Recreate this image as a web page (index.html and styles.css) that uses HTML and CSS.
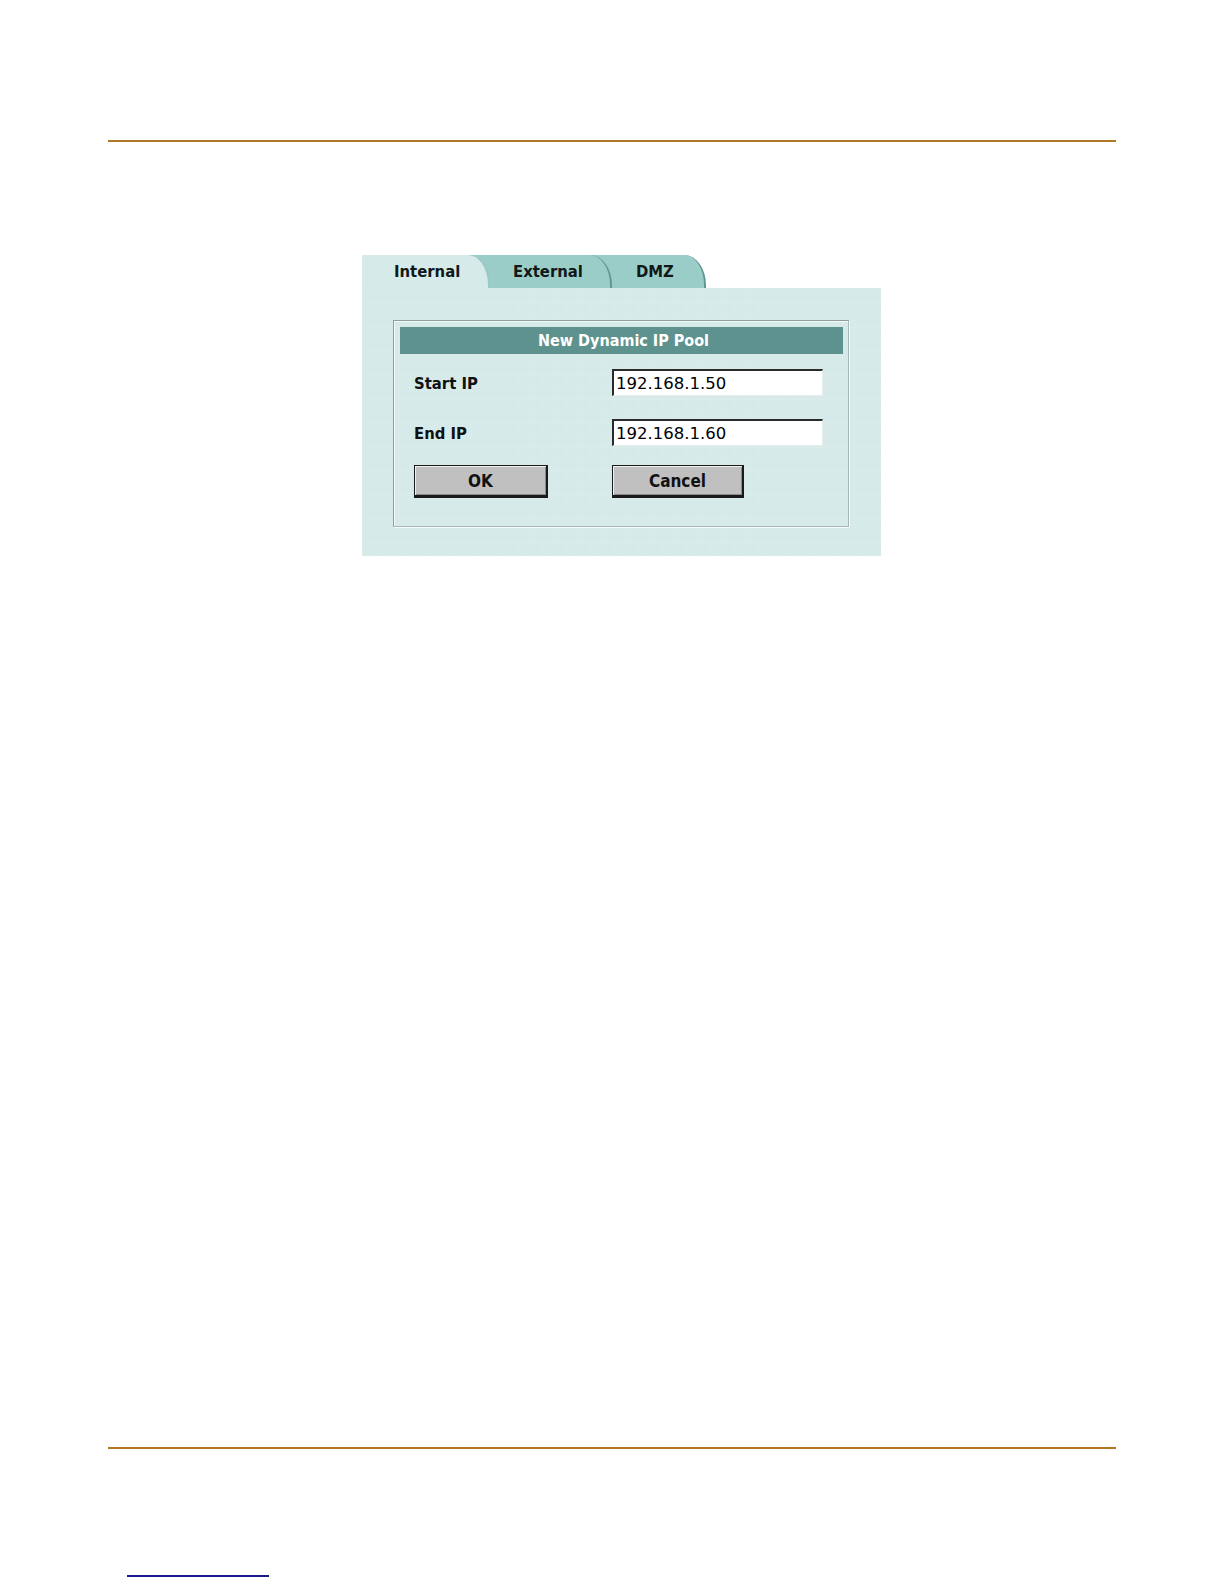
FILE: index.html
```html
<!DOCTYPE html>
<html lang="en">
<head>
<meta charset="utf-8">
<title>New Dynamic IP Pool</title>
<link rel="stylesheet" href="styles.css">
</head>
<body>
<div class="page">
  <div class="rule rule-top"></div>

  <div class="dialog">
    <div class="tabs">
      <div class="tab tab-internal">Internal</div>
      <div class="tab tab-external">External</div>
      <div class="tab tab-dmz">DMZ</div>
    </div>
    <div class="panel">
      <div class="box">
        <div class="box-title">New Dynamic IP Pool</div>
        <div class="form-row">
          <span class="label">Start IP</span>
          <span class="field">192.168.1.50</span>
        </div>
        <div class="form-row">
          <span class="label">End IP</span>
          <span class="field">192.168.1.60</span>
        </div>
        <div class="button-row">
          <span class="btn btn-ok">OK</span>
          <span class="btn btn-cancel">Cancel</span>
        </div>
      </div>
    </div>
  </div>

  <div class="spacer"></div>
  <div class="rule rule-bottom"></div>
  <div class="footer-link"></div>
</div>
</body>
</html>
```

FILE: styles.css
```css
html, body {
  margin: 0;
  padding: 0;
  background: #ffffff;
}

.page {
  width: 1224px;
  height: 1584px;
  display: flex;
  flex-direction: column;
  font-family: "DejaVu Sans Condensed", "DejaVu Sans", sans-serif;
  font-stretch: condensed;
}

.rule {
  height: 2px;
  width: 1008px;
  margin-left: 108px;
  background: #b27722;
}

.rule-top {
  margin-top: 140px;
}

.dialog {
  margin-top: 113px;
  margin-left: 362px;
  width: 519px;
  display: flex;
  flex-direction: column;
}

/* ---------- tabs ---------- */
.tabs {
  display: flex;
  height: 33px;
}

.tab {
  position: relative;
  height: 33px;
  box-sizing: border-box;
  line-height: 34px;
  font-weight: bold;
  font-size: 16.5px;
  color: #101818;
  background: #9bcdc8;
}

.tab::after {
  content: "";
  position: absolute;
  top: 0;
  left: 100%;
  width: 22px;
  height: 33px;
  box-sizing: border-box;
  background: inherit;
  border-right: 2px solid #5f9893;
  border-top-right-radius: 22px 30px;
}

.tab-internal {
  width: 106px;
  padding-left: 32px;
  background: #d6ebe9;
  z-index: 3;
}

.tab-internal::after {
  border-right-color: #9cc8c3;
}

.tab-external {
  width: 122px;
  padding-left: 45px;
  z-index: 2;
}

.tab-dmz {
  width: 94px;
  padding-left: 46px;
  z-index: 1;
}

/* ---------- panel ---------- */
.panel {
  height: 268px;
  box-sizing: border-box;
  padding: 32px 32px 29px 31px;
  background-color: #d6ebe9;
  background-image:
    repeating-linear-gradient(90deg, rgba(255,255,255,0.09) 0 1px, transparent 1px 12px),
    repeating-linear-gradient(0deg, rgba(255,255,255,0.09) 0 1px, transparent 1px 12px);
}

.box {
  height: 207px;
  box-sizing: border-box;
  border: 1px solid #8d9e9d;
  border-right-color: #a9b8b7;
  border-bottom-color: #a9b8b7;
  box-shadow: 1px 1px 0 #f4fbfa, inset 1px 1px 0 #f4fbfa;
  padding: 6px 5px 0 6px;
  display: flex;
  flex-direction: column;
}

.box-title {
  height: 27px;
  line-height: 28px;
  background: #5e928e;
  color: #ffffff;
  text-align: center;
  font-size: 16px;
  font-weight: bold;
  padding-left: 4px;
}

.form-row {
  display: flex;
  align-items: center;
  margin-left: 14px;
  height: 28px;
}

.form-row:nth-of-type(2) {
  margin-top: 14px;
}

.form-row:nth-of-type(3) {
  margin-top: 22px;
}

.label {
  width: 198px;
  padding-top: 2px;
  font-weight: bold;
  font-size: 16.5px;
  color: #111;
}

.field {
  width: 211px;
  height: 27px;
  box-sizing: border-box;
  background: #ffffff;
  border-top: 2px solid #2a2a2a;
  border-left: 2px solid #2a2a2a;
  border-right: 1px solid #e4ecec;
  border-bottom: 1px solid #e4ecec;
  padding-left: 2px;
  line-height: 26px;
  font-family: "DejaVu Sans", sans-serif;
  font-stretch: normal;
  font-size: 16.5px;
  color: #000;
}

.button-row {
  display: flex;
  margin-left: 14px;
  margin-top: 19px;
  gap: 64px;
}

.btn {
  width: 134px;
  height: 33px;
  box-sizing: border-box;
  display: flex;
  align-items: center;
  justify-content: center;
  padding-top: 1px;
  background: #c0c0c0;
  border: 1px solid #1a1a1a;
  border-right-width: 2px;
  border-bottom-width: 3px;
  box-shadow: inset 1px 1px 0 #f0f0f0, inset -1px -1px 0 #8a8a8a;
  font-size: 17px;
  font-weight: bold;
  color: #111;
}

.btn-cancel {
  width: 132px;
}

.spacer {
  flex: 1;
}

.rule-bottom {
  margin-bottom: 126px;
}

.footer-link {
  width: 142px;
  height: 2px;
  margin-left: 127px;
  background: #1a1a8c;
  margin-bottom: 7px;
}
```
